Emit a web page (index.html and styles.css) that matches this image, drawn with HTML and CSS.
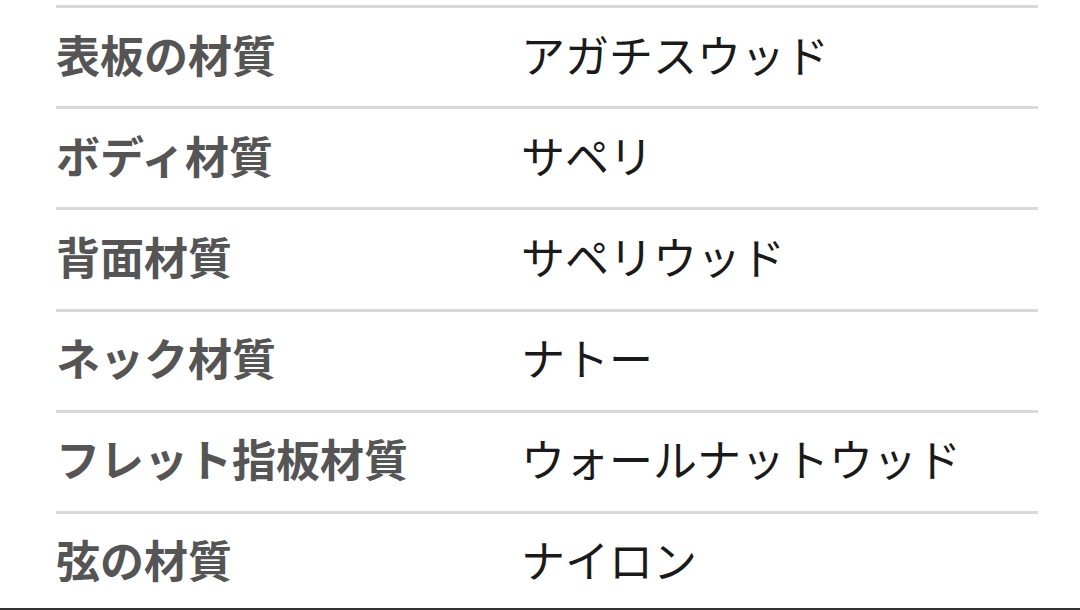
FILE: index.html
```html
<!DOCTYPE html>
<html lang="ja">
<head>
<meta charset="utf-8">
<title>仕様</title>
<link rel="stylesheet" href="styles.css">
</head>
<body>
<div class="page">
  <div class="spec">
    <div class="row"><div class="label">表板の材質</div><div class="value">アガチスウッド</div></div>
    <div class="row"><div class="label">ボディ材質</div><div class="value">サペリ</div></div>
    <div class="row"><div class="label">背面材質</div><div class="value">サペリウッド</div></div>
    <div class="row"><div class="label">ネック材質</div><div class="value">ナトー</div></div>
    <div class="row"><div class="label">フレット指板材質</div><div class="value">ウォールナットウッド</div></div>
    <div class="row last"><div class="label">弦の材質</div><div class="value">ナイロン</div></div>
  </div>
</div>
<div class="edge"></div>
</body>
</html>
```

FILE: styles.css
```css
html, body {
  margin: 0;
  padding: 0;
  background: #ffffff;
}
body {
  font-family: "Noto Sans CJK JP", "Noto Sans", sans-serif;
  overflow: hidden;
}
.page {
  height: 608px;
  padding: 5px 0 0 56px;
  box-sizing: border-box;
}
.spec {
  width: 982px;
  display: flex;
  flex-direction: column;
}
.row {
  height: 101.2px;
  box-sizing: border-box;
  border-top: 3px solid #d9d9d9;
  padding-bottom: 7px;
  display: flex;
  align-items: center;
  font-size: 44px;
  line-height: 1;
}
.row.last {
  height: 97px;
  padding-bottom: 3px;
}
.label {
  width: 465px;
  flex: none;
  font-weight: 600;
  color: #555555;
}
.value {
  color: #1a1a1a;
  font-weight: 400;
}
.edge {
  height: 2px;
  background: #333333;
}
```
